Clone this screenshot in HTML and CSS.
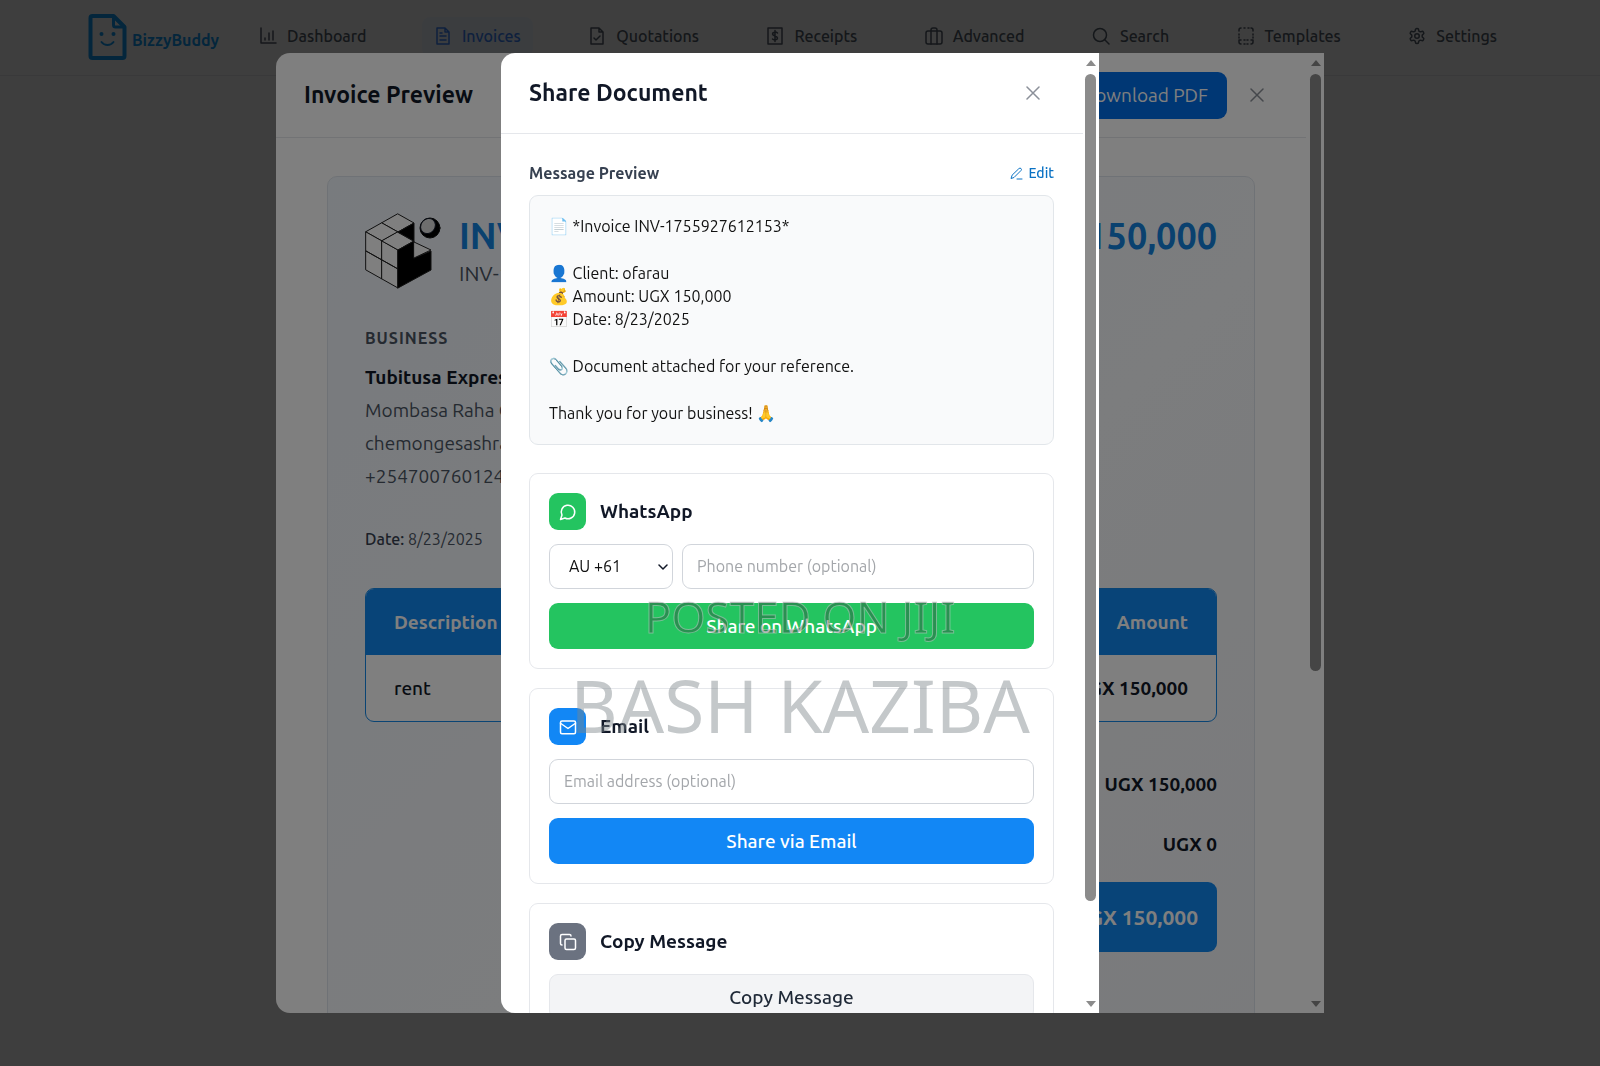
FILE: index.html
```html
<!DOCTYPE html>
<html lang="en">
<head>
<meta charset="utf-8">
<meta name="viewport" content="width=device-width, initial-scale=1">
<title>BizzyBuddy – Share Document</title>
<link rel="stylesheet" href="styles.css">
</head>
<body>
<header class="topbar">
  <a class="brand" href="#">
    <svg class="brand-mark" viewBox="0 0 38 46" fill="none" stroke="currentColor" stroke-width="4" stroke-linejoin="round" stroke-linecap="round"><path d="M4 2h21l11 11v29a2 2 0 0 1-2 2H4a2 2 0 0 1-2-2V4a2 2 0 0 1 2-2z"/><path d="M25 2v9a2 2 0 0 0 2 2h9" stroke-width="3"/><path d="M13 28c3 4 9 4 12 0" stroke-width="2"/><circle cx="13" cy="20" r="2" fill="currentColor" stroke="none"/><circle cx="25" cy="20" r="2" fill="currentColor" stroke="none"/></svg>
    <span>BizzyBuddy</span>
  </a>
  <nav class="nav">
    <a href="#"><svg class="icon" viewBox="0 0 18 18"><path d="M2 1v15h15M6 13v-2M10 13V6M14 13V4"/></svg>Dashboard</a>
    <a href="#" class="active"><svg class="icon" viewBox="0 0 18 18"><path d="M3 1h8l4 4v12H3zM11 1v4h4M6 6h2M6 9h6M6 13h6"/></svg>Invoices</a>
    <a href="#"><svg class="icon" viewBox="0 0 18 18"><path d="M3 1h8l4 4v12H3zM11 1v4h4M6 11l2 2 4-4"/></svg>Quotations</a>
    <a href="#"><svg class="icon" viewBox="0 0 18 18"><path d="M2 1h14v16H2zM9 3.500v11M11.500 6C10 4.500 6.500 5 6.500 7S11.500 9 11.500 11 8 13.500 6.500 12"/></svg>Receipts</a>
    <a href="#"><svg class="icon" viewBox="0 0 18 18"><rect x="1" y="4" width="16" height="13" rx="2"/><path d="M6 17V3a2 2 0 0 1 2-2h2a2 2 0 0 1 2 2v14"/></svg>Advanced</a>
    <a href="#"><svg class="icon" viewBox="0 0 18 18"><circle cx="8" cy="8" r="6.500"/><path d="M13 13l4 4"/></svg>Search</a>
    <a href="#"><svg class="icon" viewBox="0 0 18 18"><path d="M2 4V3a2 2 0 0 1 2-2M7 1h1M11 1h1M14 1a2 2 0 0 1 2 2v1M2 7v1M2 10v1M16 7v1M16 10v1M2 13h2M7 13h1M10 13h1M14 13h2M2 13v2a2 2 0 0 0 2 2M16 13v2a2 2 0 0 1-2 2M7 17h1M10 17h1"/></svg>Templates</a>
    <a href="#"><svg class="icon" viewBox="0 0 24 24"><path stroke-width="2" d="M12.220 2h-.44a2 2 0 0 0-2 2v.18a2 2 0 0 1-1 1.730l-.43.25a2 2 0 0 1-2 0l-.15-.08a2 2 0 0 0-2.730.73l-.22.38a2 2 0 0 0 .73 2.730l.15.1a2 2 0 0 1 1 1.720v.51a2 2 0 0 1-1 1.740l-.15.09a2 2 0 0 0-.73 2.730l.22.38a2 2 0 0 0 2.730.73l.15-.08a2 2 0 0 1 2 0l.43.25a2 2 0 0 1 1 1.730V20a2 2 0 0 0 2 2h.44a2 2 0 0 0 2-2v-.18a2 2 0 0 1 1-1.730l.43-.25a2 2 0 0 1 2 0l.15.08a2 2 0 0 0 2.730-.73l.22-.39a2 2 0 0 0-.73-2.730l-.15-.08a2 2 0 0 1-1-1.740v-.5a2 2 0 0 1 1-1.740l.15-.09a2 2 0 0 0 .73-2.730l-.22-.38a2 2 0 0 0-2.730-.73l-.15.08a2 2 0 0 1-2 0l-.43-.25a2 2 0 0 1-1-1.730V4a2 2 0 0 0-2-2z"/><circle cx="12" cy="12" r="3" stroke-width="2"/></svg>Settings</a>
  </nav>
</header>

<div class="overlay">
  <section class="modal modal-invoice" aria-label="Invoice Preview">
    <div class="modal-main">
      <header class="modal-head invoice-head">
        <h2>Invoice Preview</h2>
        <div class="head-actions">
          <button type="button" class="btn download">Download PDF</button>
          <button type="button" class="close" aria-label="Close preview"><svg viewBox="0 0 14 14"><path d="M1 1l12 12M13 1L1 13"/></svg></button>
        </div>
      </header>
      <article class="sheet">
        <div class="sheet-top">
          <svg class="cube" viewBox="0 0 76 76"><g stroke="#222" stroke-width="1" stroke-linejoin="round"><path d="M33 1l16 9-16 9-16-9z" fill="#fff"/><path d="M17 10l16 9-16 9-16-9z" fill="#fff"/><path d="M1 19l16 9v19L1 38zM1 38l16 9v19L1 57z" fill="#fff"/><path d="M17 28l16 9v19l-16-9zM17 47l16 9v19l-16-9z" fill="#fff"/><path d="M33 19l16 9-16 9-16-9z" fill="#fff"/><path d="M33 19l16-9v18z" fill="#000"/><path d="M33 37l16-9v17l17-7v19L33 75z" fill="#000"/><path d="M49 29l17 8-17 8z" fill="#fff"/></g><circle cx="65" cy="15" r="10" fill="#000" stroke="#111"/><ellipse cx="63" cy="13" rx="7" ry="8" transform="rotate(40 63 13)" fill="#ddd"/></svg>
          <div class="sheet-title">
            <h1>INVOICE</h1>
            <p>INV-1755927612153</p>
          </div>
          <strong class="sheet-amount">UGX 150,000</strong>
        </div>
        <h3 class="eyebrow">BUSINESS</h3>
        <address class="business">
          <strong>Tubitusa Express</strong>
          <span>Mombasa Raha C</span>
          <span>chemongesashra</span>
          <span>+254700760124</span>
        </address>
        <p class="date"><b>Date:</b> 8/23/2025</p>
        <div class="items">
          <table>
            <thead><tr><th scope="col">Description</th><th scope="col" class="num">Amount</th></tr></thead>
            <tbody><tr><td>rent</td><td class="num">UGX 150,000</td></tr></tbody>
          </table>
        </div>
        <div class="totals">
          <p>UGX 150,000</p>
          <p>UGX 0</p>
          <p class="grand">UGX 150,000</p>
        </div>
      </article>
    </div>
    <div class="scrollbar"><i class="up"></i><i class="track"><i class="thumb thumb-invoice"></i></i><i class="down"></i></div>
  </section>
</div>

<div class="overlay">
  <section class="modal modal-share" role="dialog" aria-label="Share Document">
    <div class="modal-main">
      <header class="modal-head share-head">
        <h2>Share Document</h2>
        <button type="button" class="close" aria-label="Close"><svg viewBox="0 0 14 14"><path d="M1 1l12 12M13 1L1 13"/></svg></button>
      </header>
      <div class="share-body">
        <div class="preview-head">
          <h3>Message Preview</h3>
          <button type="button" class="edit"><svg viewBox="0 0 13 13"><path d="M7 12h5M9 1.500a1.400 1.400 0 0 1 2 2L4 10.500l-3 1 1-3z"/></svg>Edit</button>
        </div>
        <div class="message">
          <p>📄 *Invoice INV-1755927612153*</p>
          <p>👤 Client: ofarau<br>💰 Amount: UGX 150,000<br>📅 Date: 8/23/2025</p>
          <p>📎 Document attached for your reference.</p>
          <p>Thank you for your business! 🙏</p>
        </div>
        <div class="channels">
          <section class="card">
            <div class="card-head"><span class="badge green"><svg viewBox="0 0 24 24"><path d="M7.900 20A9 9 0 1 0 4 16.100L2 22z"/></svg></span><h4>WhatsApp</h4></div>
            <div class="phone">
              <div class="select-wrap">
                <select aria-label="Country code"><option>AU +61</option></select>
                <svg viewBox="0 0 10 6"><path d="M1 1l4 4 4-4"/></svg>
              </div>
              <input type="tel" aria-label="Phone number" placeholder="Phone number (optional)">
            </div>
            <button type="button" class="btn green">Share on WhatsApp</button>
          </section>
          <section class="card">
            <div class="card-head"><span class="badge blue"><svg viewBox="0 0 24 24"><rect x="2" y="4" width="20" height="17" rx="2"/><path d="M2 7l10 7 10-7"/></svg></span><h4>Email</h4></div>
            <input type="email" aria-label="Email address" placeholder="Email address (optional)">
            <button type="button" class="btn blue">Share via Email</button>
          </section>
          <section class="card">
            <div class="card-head"><span class="badge gray"><svg viewBox="0 0 24 24"><rect x="8" y="8" width="14" height="14" rx="2"/><path d="M4 16a2 2 0 0 1-2-2V4a2 2 0 0 1 2-2h10a2 2 0 0 1 2 2"/></svg></span><h4>Copy Message</h4></div>
            <button type="button" class="btn plain">Copy Message</button>
          </section>
        </div>
      </div>
    </div>
    <div class="scrollbar"><i class="up"></i><i class="track"><i class="thumb thumb-share"></i></i><i class="down"></i></div>
  </section>
</div>

<div class="watermark">
  <p class="mark-small">POSTED ON JIJI</p>
  <p class="mark-large">BASH KAZIBA</p>
</div>
</body>
</html>
```

FILE: styles.css
```css
*, *::before, *::after { box-sizing: border-box; }
html, body { height: 100%; }
body {
  margin: 0;
  overflow: hidden;
  background: #fafafa;
  color: #111827;
  font: 16px/24px Ubuntu, "Noto Sans", "Noto Color Emoji", sans-serif;
}
h1, h2, h3, h4, p { margin: 0; }
a { color: inherit; text-decoration: none; }
button, input, select { font: inherit; }
button { cursor: pointer; }
svg { fill: none; stroke: currentColor; stroke-linecap: round; stroke-linejoin: round; flex: none; }

/* Top navigation */
.topbar {
  display: flex;
  align-items: center;
  gap: 28px;
  height: 76px;
  padding: 0 91px 1px 88px;
  border-bottom: 1px solid #e5e7eb;
}
.brand { display: flex; align-items: center; gap: 5px; color: #109af0; font-size: 16px; font-weight: 700; }
.brand span { padding-top: 6px; }
.brand-mark { width: 39px; height: 46px; }
.nav { flex: 1; display: flex; justify-content: space-between; }
.nav a {
  display: flex;
  align-items: center;
  gap: 10px;
  padding: 7px 12px 9px;
  border-radius: 8px;
  font-weight: 500;
  color: #535c68;
}
.nav .active { background: #eff6ff; color: #3b82f6; }
.icon { width: 18px; height: 18px; stroke-width: 1.500; }

/* Modals */
.overlay {
  position: fixed;
  inset: 0;
  display: flex;
  align-items: center;
  justify-content: center;
  background: rgba(0, 0, 0, .5);
}
.modal {
  display: flex;
  height: 90vh;
  overflow: hidden;
  background: #fff;
  border-radius: 14px 0 0 14px;
}
.modal-invoice { width: 1048px; max-width: 96vw; }
.modal-share { width: 598px; max-width: 96vw; }
.modal-main { flex: 1; min-width: 0; overflow: hidden; }
.modal-head {
  display: flex;
  align-items: center;
  justify-content: space-between;
  padding: 0 43px 0 28px;
  border-bottom: 1px solid #e5e7eb;
}
.modal-head h2 { font-size: 23px; line-height: 32px; font-weight: 600; }
.invoice-head { height: 85px; padding-right: 42px; }
.share-head { height: 81px; }
.head-actions { display: flex; align-items: center; gap: 23px; }
.close { display: flex; padding: 0; border: 0; background: none; color: #8b9099; }
.close svg { width: 14px; height: 14px; stroke-width: 1.500; }
.btn {
  height: 46px;
  padding: 0 19px 1px;
  border: 0;
  border-radius: 9px;
  color: #fff;
  font-size: 19px;
  font-weight: 500;
}
.download { height: 47px; background: #006ee8; font-weight: 400; }

.scrollbar {
  display: flex;
  flex-direction: column;
  align-items: flex-end;
  width: 16px;
  padding: 7px 3px 6px 0;
  color: #8b8b8b;
}
.modal-invoice .scrollbar { width: 18px; }
.scrollbar i { display: block; }
.up, .down { border: 5px solid transparent; }
.up { border-top: 0; border-bottom: 6px solid currentColor; }
.down { border-bottom: 0; border-top: 6px solid currentColor; }
.track { flex: 1; width: 11px; padding: 8px 0; }
.thumb { border-radius: 6px; background: currentColor; }
.thumb-invoice { height: 65%; }
.thumb-share { height: 90%; }

/* Invoice sheet */
.sheet {
  height: 1100px;
  margin: 38px 51px;
  padding: 36px 37px;
  border: 1px solid #dfe5ec;
  border-radius: 10px;
  background: linear-gradient(135deg, #f1f6fc, #f8fafc 50%, #f3f4f8);
}
.sheet-top { display: flex; gap: 18px; }
.cube { width: 76px; height: 76px; }
.sheet-title { flex: 1; }
.sheet-title h1, .sheet-amount { font-size: 36px; line-height: 45px; font-weight: 600; color: #1482df; }
.sheet-title p { font-size: 21px; line-height: 30px; color: #4b5563; }
.eyebrow { margin-top: 37px; font-size: 16px; font-weight: 600; letter-spacing: 1px; color: #4b5563; }
.business { display: flex; flex-direction: column; margin-top: 11px; font-style: normal; font-size: 19px; line-height: 33px; color: #4b5563; }
.business strong { font-weight: 600; color: #111827; }
.date { margin: 34px 0 37px; color: #4b5563; }
.date b { font-weight: 500; color: #374151; }
.items { border: 1px solid #1488e8; border-radius: 9px; overflow: hidden; background: #fff; }
.items table { width: 100%; border-collapse: collapse; font-size: 19px; }
.items th { height: 66px; background: #1088f0; color: #fff; font-weight: 600; }
.items td { height: 66px; font-weight: 500; }
.items th, .items td { padding: 0 28px; text-align: left; }
.items .num { text-align: right; font-weight: 600; }
.totals { display: flex; flex-direction: column; align-items: flex-end; margin-top: 32px; font-size: 19px; font-weight: 600; }
.totals p { padding: 18px 0; }
.totals .grand { width: 374px; margin-top: 8px; padding: 23px 19px; border-radius: 9px; background: #1088f0; color: #fff; font-size: 21px; text-align: right; }

/* Share dialog */
.share-body { padding: 27px 29px 28px 28px; }
.preview-head { display: flex; align-items: center; justify-content: space-between; }
.preview-head h3 { font-size: 16px; font-weight: 600; color: #374151; }
.edit { display: flex; align-items: center; gap: 5px; padding: 0; border: 0; background: none; color: #0a72c4; font-size: 14px; font-weight: 500; }
.edit svg { width: 13px; height: 13px; }
.message {
  display: flex;
  flex-direction: column;
  gap: 24px;
  margin: 10px 0 28px;
  padding: 19px;
  border: 1px solid #e2e6ea;
  border-radius: 9px;
  background: #f9fafb;
  line-height: 23px;
  color: #111;
}
.channels { display: grid; gap: 19px; }
.card { display: grid; gap: 14px; padding: 19px; border: 1px solid #e5e7eb; border-radius: 9px; }
.card-head { display: flex; align-items: center; gap: 14px; }
.card-head h4 { padding-bottom: 2px; font-size: 19px; font-weight: 600; }
.badge { display: grid; place-items: center; width: 37px; height: 37px; border-radius: 9px; color: #fff; }
.badge svg { width: 18px; height: 18px; stroke-width: 2; }
.green { background: #24c460; }
.blue { background: #1287f5; }
.gray { background: #6b7280; }
.plain { border: 1px solid #e5e7eb; background: #f3f4f6; color: #1f2937; }
.phone { display: grid; grid-template-columns: 124px 1fr; gap: 9px; }
.card input, .card select {
  width: 100%;
  min-width: 0;
  height: 45px;
  padding: 0 14px 1px;
  border: 1px solid #d1d5db;
  border-radius: 9px;
  background: #fff;
  color: #111;
}
.card input::placeholder { color: #a3a6aa; opacity: 1; }
.card select { appearance: none; padding: 0 19px 1px; }
.select-wrap { display: grid; align-items: center; }
.select-wrap > * { grid-area: 1 / 1; }
.select-wrap svg { justify-self: end; width: 10px; height: 6px; margin-right: 5px; stroke-width: 1.500; pointer-events: none; }

/* Watermark over the whole page */
.watermark {
  position: fixed;
  inset: 0;
  display: flex;
  flex-direction: column;
  align-items: center;
  justify-content: center;
  padding-top: 284px;
  font-family: "Noto Sans", sans-serif;
  white-space: nowrap;
  pointer-events: none;
}
.mark-small { font-size: 44px; line-height: 60px; color: rgba(50, 70, 60, .4); -webkit-text-stroke: 1px rgba(200, 205, 205, .5); }
.mark-large { font-size: 73px; line-height: 118px; color: rgba(125, 132, 138, .45); }
```
